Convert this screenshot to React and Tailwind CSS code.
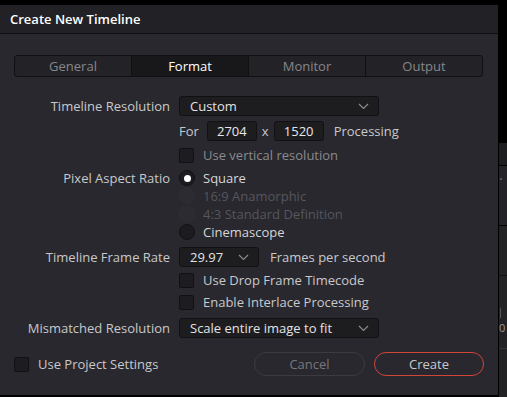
import React from "react";

const font = { fontFamily: '"Open Sans", "Noto Sans", sans-serif' };

function Chevron({ className = "" }) {
  return (
    <svg width="11" height="7" viewBox="0 0 11 7" className={className}>
      <path d="M1 1 L5.5 5.5 L10 1" fill="none" stroke="#8a8a90" strokeWidth="1.2" />
    </svg>
  );
}

function Check({ label, disabled }) {
  return (
    <div className="flex items-center h-[16px]">
      <div className="w-[15px] h-[15px] rounded-[2px] bg-[#1d1d21] border border-[#111114]" />
      <span className={`ml-[9px] ${disabled ? "text-[#8a8a8f]" : "text-[#c9c9cc]"}`}>{label}</span>
    </div>
  );
}

function Radio({ label, checked, disabled }) {
  return (
    <div className="flex items-center h-[18px]">
      <div
        className={`w-[16px] h-[16px] rounded-full flex items-center justify-center ${
          disabled ? "bg-[#2b2b31] border border-[#2e2e34]" : "bg-[#1c1c20] border border-[#111114]"
        }`}
      >
        {checked && <div className="w-[7px] h-[7px] rounded-full bg-white" />}
      </div>
      <span className={`ml-[8px] ${disabled ? "text-[#56565c]" : "text-[#d6d6d8]"}`}>{label}</span>
    </div>
  );
}

function Select({ value, width }) {
  return (
    <div
      className={`${width} h-[20px] bg-[#1d1d20] border border-[#111113] rounded-[3px] flex items-center justify-between pl-[10px] pr-[9px] text-[#e2e2e4]`}
    >
      <span>{value}</span>
      <Chevron />
    </div>
  );
}

function Row({ label, children, className = "" }) {
  return (
    <div className={`flex items-center ${className}`}>
      <div className="w-[170px] text-right text-[#c9c9cc] pr-0">{label}</div>
      <div className="ml-[9px] flex items-center">{children}</div>
    </div>
  );
}

export default function App() {
  return (
    <div className="w-[507px] h-[397px] bg-black overflow-hidden text-[13px] leading-none" style={font}>
      <div className="flex h-full pt-[5px]">
        <div className="w-[498px] h-[390px] flex flex-col bg-[#28282e]">
          <div className="h-[29px] bg-[#222226] border-b border-[#0f0f12] flex items-center pl-[10px]">
            <span className="text-white font-semibold text-[13px]">Create New Timeline</span>
          </div>
          <div className="flex flex-col px-[14px]">
            <div className="mt-[21px] h-[22px] w-[469px] flex border border-[#101013] rounded-[3px] bg-[#232327] overflow-hidden">
              <div className="flex-1 flex items-center justify-center text-[#86868b] border-r border-[#101013]">General</div>
              <div className="flex-1 flex items-center justify-center text-white bg-[#18181b] border-r border-[#101013]">Format</div>
              <div className="flex-1 flex items-center justify-center text-[#86868b] border-r border-[#101013]">Monitor</div>
              <div className="flex-1 flex items-center justify-center text-[#86868b]">Output</div>
            </div>
          </div>
          <div className="flex flex-col mt-[19px]">
            <Row label="Timeline Resolution" className="h-[20px]">
              <Select value="Custom" width="w-[200px]" />
            </Row>
            <Row label="" className="h-[20px] mt-[5px]">
              <span className="text-[#c9c9cc]">For</span>
              <div className="ml-[8px] w-[50px] h-[20px] bg-[#1d1d20] border border-[#111113] rounded-[3px] flex items-center justify-center text-[#e8e8ea]">2704</div>
              <span className="ml-[5px] text-[#c9c9cc]">x</span>
              <div className="ml-[5px] w-[50px] h-[20px] bg-[#1d1d20] border border-[#111113] rounded-[3px] flex items-center justify-center text-[#e8e8ea]">1520</div>
              <span className="ml-[10px] text-[#c9c9cc]">Processing</span>
            </Row>
            <Row label="" className="h-[16px] mt-[6px]">
              <Check label="Use vertical resolution" disabled />
            </Row>
            <div className="flex mt-[6px]">
              <div className="w-[170px] text-right text-[#c9c9cc] h-[18px] flex items-center justify-end">Pixel Aspect Ratio</div>
              <div className="ml-[9px] flex flex-col">
                <Radio label="Square" checked />
                <Radio label="16:9 Anamorphic" disabled />
                <Radio label="4:3 Standard Definition" disabled />
                <Radio label="Cinemascope" />
              </div>
            </div>
            <Row label="Timeline Frame Rate" className="h-[20px] mt-[6px]">
              <Select value="29.97" width="w-[80px]" />
              <span className="ml-[11px] text-[#c9c9cc]">Frames per second</span>
            </Row>
            <Row label="" className="h-[16px] mt-[5px]">
              <Check label="Use Drop Frame Timecode" />
            </Row>
            <Row label="" className="h-[16px] mt-[6px]">
              <Check label="Enable Interlace Processing" />
            </Row>
            <Row label="Mismatched Resolution" className="h-[20px] mt-[8px]">
              <Select value="Scale entire image to fit" width="w-[200px]" />
            </Row>
          </div>
          <div className="flex items-center mt-[14px] px-[14px]">
            <Check label="Use Project Settings" />
            <div className="flex-1" />
            <div className="w-[111px] h-[24px] rounded-full border border-[#3b3b41] flex items-center justify-center text-[#77777d]">Cancel</div>
            <div className="ml-[9px] w-[110px] h-[24px] rounded-full border border-[#d0453a] flex items-center justify-center text-[#c9c9cc]">Create</div>
          </div>
        </div>
        <div className="w-[1px] bg-black" />
        <div className="flex-1 flex flex-col">
          <div className="h-[138px] bg-black" />
          <div className="h-[22px] bg-[#1e1e20]" />
          <div className="h-[1px] bg-black" />
          <div className="h-[59px] bg-[#242428] relative">
            <div className="absolute left-[1px] top-[12px] w-[2px] h-[2px] bg-[#555]" />
          </div>
          <div className="h-[1px] bg-black" />
          <div className="h-[49px] bg-[#232326]" />
          <div className="h-[1px] bg-[#111]" />
          <div className="h-[72px] bg-[#232326] relative overflow-hidden">
            <div className="absolute left-[1px] top-[32px] w-[1px] h-[10px] bg-[#555]" />
            <div className="absolute left-0 top-[46px] text-[#999] text-[11px]">0</div>
          </div>
          <div className="h-[1px] bg-[#333338]" />
          <div className="flex-1 bg-[#232326]" />
        </div>
      </div>
    </div>
  );
}
